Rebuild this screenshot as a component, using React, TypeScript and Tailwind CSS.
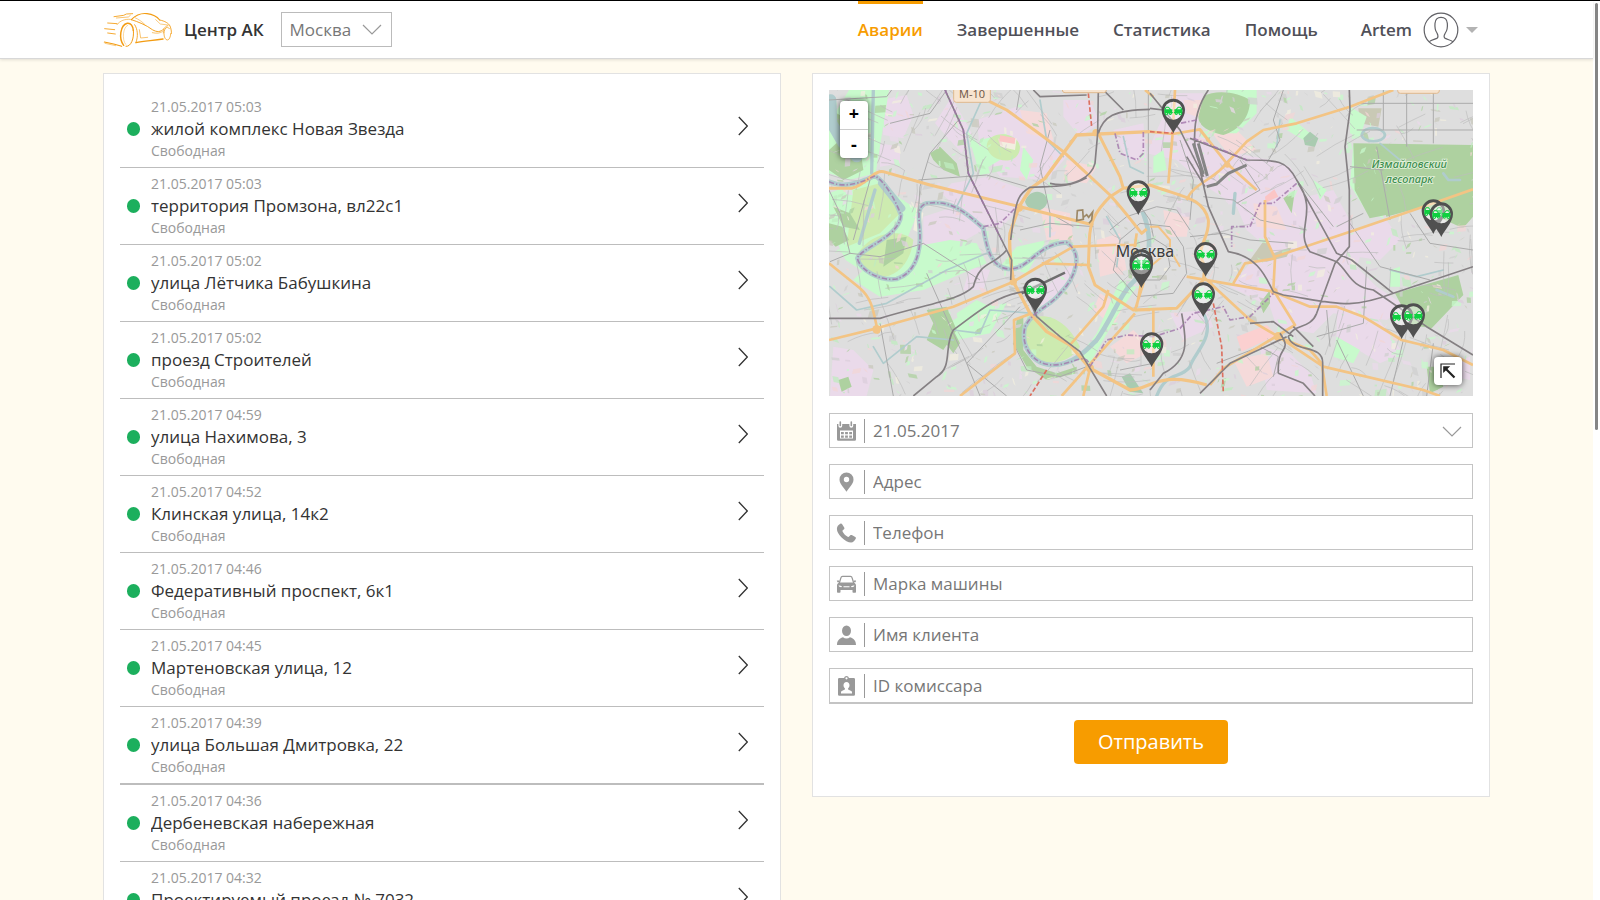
import React from "react";

type Incident = { time: string; place: string };

const incidents: Incident[] = [
  { time: "21.05.2017 05:03", place: "жилой комплекс Новая Звезда" },
  { time: "21.05.2017 05:03", place: "территория Промзона, вл22с1" },
  { time: "21.05.2017 05:02", place: "улица Лётчика Бабушкина" },
  { time: "21.05.2017 05:02", place: "проезд Строителей" },
  { time: "21.05.2017 04:59", place: "улица Нахимова, 3" },
  { time: "21.05.2017 04:52", place: "Клинская улица, 14к2" },
  { time: "21.05.2017 04:46", place: "Федеративный проспект, 6к1" },
  { time: "21.05.2017 04:45", place: "Мартеновская улица, 12" },
  { time: "21.05.2017 04:39", place: "улица Большая Дмитровка, 22" },
  { time: "21.05.2017 04:36", place: "Дербеневская набережная" },
  { time: "21.05.2017 04:32", place: "Проектируемый проезд № 7032" },
];

/* ---------- header drawings ---------- */

function Logo() {
  return (
    <svg viewBox="42 33 210 108" className="h-9 w-[70px] shrink-0" fill="none" stroke="#f39c12" strokeLinecap="round" strokeLinejoin="round">
      <g strokeWidth="2.6">
        <path d="M75 47 L104 43 L112 39 L131 38" />
        <path d="M82 51 L118 48 L124 43" strokeWidth="1.8" />
        <path d="M56 66 L84 68" />
        <path d="M47 83 L77 86 M56 96 L79 99" />
        <path d="M46 123 L74 129 L98 136" strokeWidth="3.2" />
        <path d="M48 127 L80 134" strokeWidth="1.6" />
        <path d="M84 71 C94 58 108 54 124 55" strokeWidth="1.8" />
        <path d="M127 56 C140 43 158 36 174 38 C190 40 204 47 212 57" strokeWidth="3.4" />
        <path d="M212 57 C228 60 239 67 243 75 C246 82 248 92 247 98" strokeWidth="2.6" />
        <path d="M127 56 C146 62 172 72 190 86 C204 94 214 94 224 84" strokeWidth="2.8" />
        <path d="M138 50 C150 56 158 61 168 71" strokeWidth="1.6" />
        <path d="M200 56 L214 69 L236 72" strokeWidth="1.6" />
        <path d="M137 71 C146 84 148 106 141 124" strokeWidth="2.6" />
        <path d="M141 125 C164 120 190 119 222 114" strokeWidth="4.2" />
        <path d="M151 86 L155 111 L176 109" strokeWidth="1.8" />
        <path d="M190 95 C204 98 212 97 220 92" strokeWidth="1.8" />
      </g>
      <path d="M104 133 C88 112 94 72 115 67 C124 66 131 74 133 88" strokeWidth="4.4" />
      <path d="M133 88 C136 112 126 138 111 136" strokeWidth="3" />
      <path d="M110 130 C98 116 102 78 116 73" strokeWidth="1.2" />
      <ellipse cx="235" cy="98" rx="10" ry="19" strokeWidth="2.2" strokeDasharray="76 16" />
      <path d="M223 96 C222 84 228 75 237 74" strokeWidth="2" />
    </svg>
  );
}

function Avatar() {
  return (
    <svg viewBox="578 35 108 108" className="h-9 w-9" fill="none" stroke="#616166" strokeWidth="3.6">
      <circle cx="632" cy="89" r="50.5" />
      <path d="M597 124 C604 118 616 117 621 113 C625 109 623 104 620 98 C615 91 613 80 614 69 C615 56 621 51 632 51 C643 51 650 56 651 69 C652 80 650 91 645 98 C641 104 640 109 643 113 C648 117 660 118 668 124" />
    </svg>
  );
}

function ChevronDown({ className }: { className: string }) {
  return (
    <svg viewBox="0 0 20 12" className={className} fill="none" stroke="#999" strokeWidth="1.2" aria-hidden="true">
      <path d="M1 1 L10 10 L19 1" />
    </svg>
  );
}

/* ---------- form icons ---------- */

const iconClass = "h-5 w-5 shrink-0 text-[#999]";

const CalendarIcon = () => (
  <svg viewBox="0 0 20 20" className={iconClass}>
    <path fill="currentColor" fillRule="evenodd" d="M1 3h1.400v1.800a1.900 1.900 0 0 0 3.800 0V3h7.200v1.800a1.900 1.900 0 0 0 3.800 0V3H20v15.500a1.300 1.300 0 0 1-1.300 1.300H2.300a1.300 1.300 0 0 1-1.300-1.300zM4 9.500v8h13v-8z" />
    <path stroke="currentColor" strokeWidth="1.600" strokeLinecap="round" d="M4.300 1v3.500M15.300 1v3.500" />
    <path fill="currentColor" d="M5 11h2.800v2.300H5zM9.100 11h2.800v2.300H9.100zM13.200 11h2.800v2.300h-2.800zM5 14.500h2.800v2.300H5zM9.100 14.500h2.800v2.300H9.100zM13.200 14.500h2.800v2.300h-2.800z" />
  </svg>
);
const PlaceIcon = () => (
  <svg viewBox="0 0 20 20" className={iconClass}>
    <path fill="currentColor" fillRule="evenodd" d="M10.500 0.500a7 7 0 0 0-7 7c0 4.500 4.500 8 7 12.300c2.500-4.300 7-7.800 7-12.300a7 7 0 0 0-7-7zm0 4.300a2.700 2.700 0 1 1 0 5.400a2.700 2.700 0 0 1 0-5.400z" />
  </svg>
);
const PhoneIcon = () => (
  <svg viewBox="0 0 20 20" className={iconClass}>
    <path fill="currentColor" d="M4.300 0.700C5 0.300 5.600 0.400 6 1l2.200 3.400c.4.700.3 1.300-.2 1.800L6.800 7.300c-.4.400-.4.800-.1 1.400c1.200 2.200 2.900 3.900 5 5.100c.6.300 1 .2 1.400-.2l1-1.200c.5-.5 1.100-.6 1.700-.3l3.500 2c.6.300.8.900.5 1.500c-.9 2.300-2.700 4-4.700 4c-2.700 0-6.500-2.100-9.500-5.100S.9 8.500.9 5.700C.9 3.500 2.300 1.700 4.300.7z" />
  </svg>
);
const CarIcon = () => (
  <svg viewBox="0 0 20 20" className={iconClass}>
    <path fill="none" stroke="currentColor" strokeWidth="1.200" d="M3.200 9.500 L5 3.500 Q5.300 2.300 6.500 2.300 H14.500 Q15.700 2.300 16 3.500 L17.800 9.500" />
    <path fill="currentColor" fillRule="evenodd" d="M3.300 8.500H17.700C19.200 9 20 10 20 11.500V18a.8.800 0 0 1-.8.800H17.300a.8.800 0 0 1-.8-.8V16H4.500v2a.8.800 0 0 1-.8.800H1.800a.8.800 0 0 1-.8-.8V11.500C1 10 1.800 9 3.300 8.500zM2.500 11.500c.5 1.400 1.500 1.800 3.500 1.600c0-1.200-1.500-2-3.500-1.600zM18.500 11.500c-2-.4-3.500.4-3.500 1.600c2 .2 3-.2 3.500-1.600zM7.500 12.300v1h6v-1z" />
    <path fill="currentColor" d="M.8 6.500h2.500v1.800H1.500zM20.200 6.500h-2.500v1.800h1.800z" />
  </svg>
);
const PersonIcon = () => (
  <svg viewBox="0 0 20 20" className={iconClass}>
    <ellipse cx="10.500" cy="5.800" rx="4.500" ry="5.300" fill="currentColor" />
    <path fill="currentColor" d="M1 20c0-4 1.800-6.300 6-7.800c1 .8 2.200 1.200 3.500 1.200s2.500-.4 3.500-1.200c4.200 1.500 6 3.800 6 7.800z" />
  </svg>
);
const BadgeIcon = () => (
  <svg viewBox="0 0 20 20" className={iconClass}>
    <path fill="currentColor" fillRule="evenodd" d="M3.300 2H8a2.600 2.600 0 0 1 5 0h4.700A1.300 1.300 0 0 1 19 3.300V18.500a1.300 1.300 0 0 1-1.300 1.300H3.300A1.300 1.300 0 0 1 2 18.500V3.300A1.300 1.300 0 0 1 3.300 2zM10.500 1.200a1.100 1.100 0 1 0 0 2.200a1.100 1.100 0 0 0 0-2.200zM10.500 6c-1.900 0-3 1.400-3 3.200c0 1.300.6 2.300 1.400 3v1.300l-3.100 1.400c-.6.300-.8.700-.8 1.400V17.500h11v-1.200c0-.7-.2-1.100-.8-1.400l-3.100-1.400v-1.300c.8-.7 1.400-1.700 1.400-3c0-1.800-1.100-3.200-3-3.200z" />
  </svg>
);

/* ---------- map ---------- */

/* Small deterministic generator: the same patches on every render. */
function makeRandom(seed: number) {
  let s = seed;
  return () => {
    s = (s * 1664525 + 1013904223) % 4294967296;
    return s / 4294967296;
  };
}

const patchColors = ["#c8facc", "#c8facc", "#aed1a0", "#f3d6d6", "#eadaea", "#f2efe0", "#c9c9bd", "#c0ecc0", "#dccfdc", "#d0d0d0"];
const patches = (() => {
  const r = makeRandom(77);
  return Array.from({ length: 1300 }, () => {
    const x = Math.round(27 + r() * 1932);
    const y = Math.round(30 + r() * 918);
    const w = Math.round(4 + r() * r() * 32);
    const h = Math.round(4 + r() * r() * 26);
    const k = Math.round((r() - 0.5) * 14);
    return { d: `M${x} ${y}l${w} ${k}l${k} ${h}l${-w} ${-k}z`, fill: patchColors[Math.floor(r() * patchColors.length)] };
  });
})();

const streets = (() => {
  const r = makeRandom(31);
  return Array.from({ length: 280 }, () => {
    const x = 27 + r() * 1932;
    const y = 30 + r() * 918;
    const dx = x - 985;
    const dy = y - 520;
    const d = Math.hypot(dx, dy) || 1;
    const radial = r() > 0.5;
    const ux = radial ? dx / d : -dy / d;
    const uy = radial ? dy / d : dx / d;
    const len = 40 + r() * 110;
    const bend = (r() - 0.5) * 26;
    return `M${x.toFixed(0)} ${y.toFixed(0)}q${((ux * len) / 2 - uy * bend).toFixed(0)} ${((uy * len) / 2 + ux * bend).toFixed(0)} ${(ux * len).toFixed(0)} ${(uy * len).toFixed(0)}`;
  }).join("");
})();

const pins: [number, number][] = [
  [1060, 160],
  [955, 405],
  [1157, 590],
  [964, 612],
  [964, 624],
  [1150, 711],
  [646, 697],
  [995, 861],
  [1840, 462],
  [1864, 471],
  [1745, 777],
  [1780, 774],
];

function CarShape({ flip }: { flip?: boolean }) {
  return (
    <g transform={flip ? "scale(-1 1)" : undefined}>
      <path fill="#0fd040" d="M-27 -72 L-22 -80 L-14 -80 L-8 -73 L-2 -71 L-4 -66 L-1 -62 L-5 -59 L-27 -60z" />
      <path fill="#e8f0e8" d="M-21 -77 L-15 -77 L-11 -72 L-23 -72z" />
      <circle cx="-21" cy="-59" r="5" fill="#0fd040" />
      <circle cx="-9" cy="-59" r="4" fill="#0fd040" />
      <circle cx="-21" cy="-59" r="1.800" fill="#e8f0e8" />
      <circle cx="-9" cy="-59" r="1.300" fill="#e8f0e8" />
    </g>
  );
}

function MapPin({ x, y }: { x: number; y: number }) {
  return (
    <g transform={`translate(${x} ${y})`}>
      <path
        fill="#505050"
        fillRule="evenodd"
        d="M0 0 C-6 -16 -35 -44 -35 -69 A35 35 0 0 1 35 -69 C35 -44 6 -16 0 0z M0 -95 A27 27 0 1 0 0 -41 A27 27 0 1 0 0 -95z"
      />
      <circle cx="0" cy="-68" r="27" fill="#fff" fillOpacity="0.4" />
      <CarShape />
      <CarShape flip />
    </g>
  );
}

function CityMap() {
  return (
    <svg viewBox="27 30 1932 918" preserveAspectRatio="xMidYMid slice" className="absolute inset-0 h-full w-full" role="img" aria-label="Карта Москвы">
      <rect x="27" y="30" width="1932" height="918" fill="#dedede" />
      {/* industrial and residential zones */}
      <g fill="#eadaea">
        <path d="M180 60l80 -15 20 60 -30 70 -60 -10zM395 50l60 110 -30 60 -80 -90zM470 120l120 -40 90 80 60 70 -60 70 -140 -10 -60 -80zM395 310l110 -20 110 40 -20 60 -60 60 -70 -30 -70 -50 -30 -30zM310 410l110 -35 70 75 -80 45 -100 0zM40 800l60 10 60 60 -20 78 -110 0zM700 600l60 -50 0 50 -80 90 -30 -30zM730 60l80 0 30 70 -60 40 -50 -60zM880 150l90 -20 10 110 -60 0zM180 190l60 10 0 50 -60 10zM450 560l60 10 -20 60 -60 0z" />
        <g transform="translate(990 0)">
          <path d="M70 40l90 0 -20 110 70 60 150 30 60 20 50 90 80 -20 60 110 30 60 -20 60 60 60 90 60 -60 40 -160 -20 -60 60 -110 -20 -20 -60 -120 -60 60 -70 60 -40 -70 -60 -30 -70 -90 -60 -90 -80 -90 -20zM620 450l90 -30 40 60 -60 60 -70 -10zM560 680l120 30 80 110 -70 30 -130 -80zM330 800l90 20 60 60 20 60 -150 -10zM60 700l110 -10 20 50 -90 40zM900 850l60 -20 0 70 -50 -10zM300 330l60 -10 70 110 -60 60 -70 -40z" />
          <path fill="#c9c9b5" d="M300 540l50 -70 20 50 55 -20 -15 30 -60 15zM625 85l70 0 -10 55 -55 -10z" />
        </g>
      </g>
      <g fill="#f5dada">
        <path d="M600 90l80 10 20 80 -80 -20zM830 480l70 -20 20 110 -80 20zM660 380l90 20 10 80 -80 0zM840 640l70 40 -30 60 -60 -50zM870 800l70 -50 60 60 -80 40zM740 240l90 20 -30 50 -70 -10zM1030 390l80 20 -10 60 -60 0zM1140 110l110 40 60 60 -80 20zM1300 370l70 10 30 70 -90 -10zM1090 60l60 0 10 60 -60 -20zM1240 840l100 -20 20 70 -80 30z" />
      </g>
      {/* parks and fields */}
      <g fill="#c8facc">
        <path d="M27 130l60 -100 120 0 -40 250 -80 20 -60 -20zM27 340l130 -50 90 70 50 30 -50 120 -80 90 -90 -60 -50 -100zM180 520l210 -40 80 10 30 60 -50 20 -140 60 -130 20 -80 -50zM440 150l50 60 20 70 -30 5zM480 180l80 -20 -20 80 -50 30zM900 600l50 20 -60 90 -80 140 -40 -10 60 -80 40 -90zM340 770l60 -50 70 -40 90 -10 -50 90 -100 20zM540 560l50 -60 90 -20 -60 100zM1000 230l30 -20 10 60 -40 10zM610 200l30 40 -20 60 -20 -30zM410 700l60 -40 40 20 -20 60 -70 20z" />
        <g transform="translate(990 0)">
          <path d="M230 30l90 0 0 70 -60 60 -90 0zM600 80l50 30 -20 60 -30 -10zM610 195l50 10 40 210 -50 -20 -50 -80zM720 570l30 -10 0 60 -30 0zM410 150l50 30 20 -20 -60 -50zM560 770l70 40 -20 40 -60 -20zM490 300l40 30 -20 30z" />
        </g>
      </g>
      <path fill="#cdebb0" d="M110 530 C140 460 240 440 280 480 C270 560 220 600 160 590zM100 330l80 -20 60 90 -60 60 -100 40zM500 200c0 -50 90 -50 100 0c0 60 -90 50 -100 0zM620 720 C680 690 740 720 780 800 C750 850 680 860 640 830 C600 790 600 750 620 720z" />
      <path fill="#f2efe0" d="M290 380l20 20 -10 60 -20 -10zM540 170l50 5 -5 35 -45 -10z" />
      <g fill="#aed1a0">
        <path d="M60 180l60 20 10 70 -60 30 -43 -30 0 -60zM27 430l40 10 20 40 -40 20 -20 -20zM320 690l60 -10 30 70 -40 60 -50 -30 20 -50zM330 220l30 -20 50 50 10 40 -50 -20 -30 -30zM370 780l30 -30 20 40 -20 30zM590 720l20 -10 0 100 40 50 60 20 60 -20 0 20 -90 20 -60 -40 -40 -70zM55 900l30 -10 10 30 -30 15zM30 90l40 20 20 60 -50 -20zM40 380l50 20 30 50 -50 -10zM200 480l60 -10 -10 50 -60 40z" />
        <g transform="translate(990 0)">
          <path d="M160 50 C200 25 270 40 300 60 C300 110 270 150 220 165 C180 155 145 140 145 110zM610 190l359 5 0 215 -30 35 -130 -60 -150 30 -45 -85zM735 640l190 -55 15 60 -95 100 -60 -10zM400 355l35 -25 -10 70zM830 860l30 0 20 60 -40 20zM330 670l30 -40 0 40 -20 30z" />
        </g>
      </g>
      {/* scattered blocks */}
      <g opacity="0.75">
        {patches.map((p, i) => (
          <path key={i} d={p.d} fill={p.fill} />
        ))}
      </g>
      <path fill="#aed1a0" d="M1650 215l300 -15 9 200 -30 30 -120 -50 -110 30z" />
      <path fill="#a9cbb0" d="M615 365 C625 325 680 325 682 365 C675 400 625 400 615 365zM1450 175l20 -20 25 20 -10 25 -30 -5zM905 890l25 -10 40 60 -40 -5z" />
      <path fill="#fbc5c5" d="M540 166l46 8 -2 18 -46 -8zM1335 350l28 -22 12 22 -38 18z" />
      <path fill="#fbd0d0" d="M1250 770l90 -35 30 30 -105 50z" />
      {/* water */}
      <g fill="none" stroke="#b0cccd" strokeLinejoin="round" strokeLinecap="round">
        <path strokeWidth="34" d="M32 60 L35 130 L70 190 L110 230" />
        <path strokeWidth="14" d="M27 305 C80 330 140 300 165 287 C200 310 230 370 243 405 C240 470 120 505 112 535 C120 570 180 605 230 597 C280 580 300 530 300 470 C300 420 285 380 320 370 C390 360 430 390 490 445 C500 500 510 560 565 567 C630 570 650 490 740 487 C790 520 770 590 720 640 C690 680 640 690 615 740 C600 800 640 855 700 855 C760 855 800 810 830 780 C880 710 900 640 945 600 C990 550 1000 480 970 400" />
        <path strokeWidth="22" d="M185 310 L245 385" />
        <path strokeWidth="10" d="M165 330 L118 490 M160 30 L155 280 M1150 700 C1190 770 1120 820 1110 860 C1080 900 1040 870 1010 948M1240 400 L1245 340" />
        <path strokeWidth="5" d="M485 60 L440 160 L460 280 L410 380 M660 60 L680 180 L730 230 M500 520 L380 570 L200 670 L110 690 L30 620 M400 750 L480 760 L510 690 L640 700 M160 800 L190 850 L290 770 L400 780 M1380 120 L1370 200 M690 400 L690 470M860 410 L900 480 L890 560M1710 570 L1790 590 L1870 570M1680 190 L1740 240M910 170 L930 260 L970 280" />
        <path strokeWidth="8" d="M1625 165 C1630 135 1690 140 1695 165 C1690 190 1630 190 1625 165M1870 280 L1885 300 L1920 300M1850 630 L1900 650" />
      </g>
      {/* minor streets */}
      <path d={streets} fill="none" stroke="#bdbdbd" strokeWidth="2" />
      <g fill="none" stroke="#ababab" strokeWidth="3">
        <path d="M27 60 L200 50 L215 30M420 115 L330 220 L300 320 L295 400M295 300 L500 285 L620 320M30 545 L90 520 L180 530 L310 490 L480 600M320 580 L440 850 L480 948M180 730 L220 948M90 520 L60 400 L27 330M440 850 L600 680M690 150 L660 260 L690 400 L760 440M820 440 L690 430 L600 450M580 790 L620 870 L720 890 L800 860M100 480 L150 300M380 30 L330 100 L210 130M600 30 L590 90M440 850 L560 948M900 870 L1000 850" />
        <path d="M910 320 L940 350 L990 420 L1000 470 M870 450 L920 410 L1010 380 L1070 390 L1110 450M880 570 L950 650 L1060 640 L1100 580 L1090 500 L1050 440 L960 430 L900 480 L880 570" />
        <path d="M930 580 L960 600 L1020 600 L1050 560 L1040 500 L1000 475 L950 490 L930 530zM985 30 L985 330M1080 180 L1120 300 L1110 420" />
        <g transform="translate(990 0)">
          <path d="M400 30 L370 120 L390 180 L350 250M120 470 L220 460 L300 480 L430 490M440 300 L550 440M620 150 L969 150M620 70 L969 70M700 30 L700 150M770 30 L770 200M850 30 L850 190M680 200 L720 420M600 260 L700 270M600 430 L690 560 L840 600M780 400 L840 490 L969 510M650 560 L640 730 L500 770M760 780 L720 948M850 790 L830 948M560 780 L640 948M200 850 L330 800 L385 830 L370 890M270 240 L330 330 L260 370M160 350 L250 360 L330 420 L470 450M560 440 L640 400M530 690 L540 800" />
        </g>
      </g>
      {/* motorways */}
      <g fill="none" stroke="#f3c484" strokeWidth="8" strokeLinejoin="round">
        <path d="M27 325 L95 325 C140 315 160 270 190 275 L330 315 L600 380 L820 435" strokeWidth="9" />
        <path d="M490 55 L560 90 L650 155 L730 215 L870 345 C920 400 940 430 965 460 L980 447" strokeWidth="9" />
        <path d="M990 155 L770 165 L675 295 L632 325 L597 380 L570 460 C565 510 575 560 580 605 L630 700 L680 755 L750 795 L810 865 L930 930 C990 930 1010 870 1160 915" strokeWidth="10" />
        <path d="M27 780 L170 745 L400 680 L580 605 L690 540 L760 500 L880 495 L950 495M27 550 L120 625 C160 660 160 700 175 760M420 948 L585 820 L582 720 L635 700M665 550 L805 555M725 948 L945 700M790 948 L810 865M750 795 L850 680 L865 630M945 690 L990 690" />
        <path d="M835 160 L900 290 L910 325 L870 350 C820 400 810 430 808 480 L805 560 L825 615 L940 690 L1070 685 L1150 600 L1155 560 C1120 500 1170 480 1165 420 C1150 350 1080 350 990 315 L910 325" strokeWidth="9" />
        <path d="M975 30 L1000 50M950 460 L940 530 L970 610 L945 690M965 600 L950 680M1000 690 L1000 820 L1000 890" />
        <g transform="translate(990 0)">
          <path d="M75 30 L68 160 L55 310M150 150 L230 250 L320 330M0 155 L68 162 L150 148 L230 250M110 360 C130 310 190 300 230 250 L290 185 L340 150 L440 130 L600 80 L730 30M375 530 L600 455 L820 380 L969 328" />
          <path d="M250 610 L285 550 L375 535 L370 630 L435 735 L220 865 L180 915 M110 590 L370 635 L480 680 L560 680 L640 710 L755 780 L880 810 L969 855M160 590 L300 720 L385 770 L520 860 L820 930 L870 948M385 770 L480 810 L515 850 L530 948M375 535 L345 470 L345 360" />
          <path d="M0 440 L25 440 L60 480 L60 510 L0 560M60 510 L90 560" strokeWidth="6" />
        </g>
      </g>
      <g fill="#f3c484">
        <circle cx="170" cy="748" r="13" />
        <circle cx="597" cy="383" r="12" />
        <circle cx="580" cy="605" r="11" />
        <circle cx="810" cy="865" r="12" />
        <circle cx="828" cy="158" r="11" />
        <circle cx="1375" cy="770" r="14" />
        <circle cx="1362" cy="634" r="11" />
        <circle cx="1222" cy="254" r="9" />
      </g>
      {/* railways */}
      <g fill="none" stroke="#858083" strokeWidth="5" strokeLinejoin="round">
        <path d="M375 30 L430 150 L445 280 L500 390 L545 480 L560 510 C520 560 480 540 460 620 C420 660 330 670 180 715 L27 715M560 510 L575 540 L572 600M610 635 C520 650 470 700 400 750 C370 800 400 860 350 890 L280 948M800 293 C740 325 700 318 630 322 C590 345 590 370 580 420 L572 480M835 30 L833 160 L825 250 C815 290 760 325 690 310M835 160 C850 110 880 90 990 88M850 30 L910 90M640 30 L660 50 L800 45M610 620 L650 710 L720 770 L780 815 L860 948" />
        <path d="M605 640 L735 578" stroke="#6e6e6e" strokeWidth="7" />
        <g transform="translate(990 0)">
          <path d="M0 40 L90 150 L150 270 L175 380 L235 515 C330 530 350 600 370 635 L400 645 C560 670 600 690 730 640 L969 560M0 85 L40 90M175 30 C140 80 130 140 135 200 L160 290M120 175 L290 240 C380 240 410 240 440 300 C510 400 430 450 480 515 L560 545 C600 580 600 620 670 630 L830 740 L969 825M445 310 L560 520 L605 540 L730 640M598 30 L600 90 L585 200 L598 330 L598 500 L555 550 L500 700 C480 750 430 730 415 770 C430 820 520 790 518 850 L518 948M300 730 L370 725 L430 770M150 940 L240 850 L410 770M385 880 C380 790 430 820 390 760M430 740 L490 800M385 880 L460 910 L495 948M95 700 C110 780 120 840 40 880 L0 930M165 320 L110 230" />
          <path stroke="#858585" strokeWidth="9" d="M145 190 L172 288M130 190 L160 282M170 320 L200 312 L235 280 L290 255" />
        </g>
      </g>
      {/* district boundaries */}
      <g fill="none" stroke="#a277ab" strokeWidth="5" strokeDasharray="16 6 4 6" opacity="0.8" strokeLinejoin="round">
        <path d="M27 305 C80 330 140 300 165 287 C200 310 230 370 243 405 C240 470 120 505 112 535 C120 570 180 605 230 597 C280 580 300 530 300 470 C300 420 285 380 320 370 C390 360 430 390 490 445 C500 500 510 560 565 567 C630 570 650 490 740 487 C790 520 770 590 720 640 C690 680 640 690 615 740 C600 800 640 855 700 855 C760 855 800 810 810 860" />
        <path d="M490 440 L540 430 L590 380M885 160 L900 220 L950 240 L970 220 L970 155M810 860 L860 780 L920 765 L1000 770 L1080 745 L1120 700 L1210 680 L1230 720 L1290 710 L1360 640" />
        <path d="M1430 310 L1360 370 L1320 370 L1290 440 L1235 440 L1235 500M375 30 L430 150 L445 280 L500 390 L545 480M1130 120 L1080 130M1120 175 L1280 240" />
      </g>
      <g fill="none" stroke="#dc7060" strokeWidth="5" strokeDasharray="14 7">
        <path d="M805 40 L815 140M1180 670 L1205 800 L1210 940M680 870 L630 948M990 155 L1060 160" />
      </g>
      {/* landmark */}
      <path d="M772 392l16 -2 2 28 -20 4zM790 412l10 -8 6 8 12 -16 -3 24 -8 10" fill="none" stroke="#9c8866" strokeWidth="5" />
      {/* road shields */}
      <g fill="#f7e4cf" stroke="#dfb98f" strokeWidth="3">
        <rect x="401" y="10" width="110" height="57" rx="8" />
        <rect x="727" y="-20" width="132" height="58" rx="8" />
        <rect x="1733" y="-20" width="125" height="60" rx="8" />
      </g>
      <g fontFamily="'Open Sans', 'Noto Sans', sans-serif" textAnchor="middle">
        <text x="456" y="53" fontSize="33" fontWeight="500" fill="#6b5344">
          М-10
        </text>
        <g fill="#3f8f4f" stroke="#e4f2dd" strokeWidth="5" paintOrder="stroke" fontFamily="'Noto Sans', sans-serif" fontStyle="italic" fontWeight="500" fontSize="33">
          <text x="1768" y="265">Измайловский</text>
          <text x="1768" y="308">лесопарк</text>
        </g>
        <text x="975" y="530" fontSize="48" fontFamily="'Noto Sans', sans-serif" fill="#3c3c3c" stroke="#e8e8e8" strokeWidth="4" paintOrder="stroke">
          Москва
        </text>
      </g>
      {pins.map(([x, y], i) => (
        <MapPin key={i} x={x} y={y} />
      ))}
    </svg>
  );
}

/* ---------- form ---------- */

function Field({ id, label, icon, last }: { id: string; label: string; icon: React.ReactNode; last?: boolean }) {
  return (
    <div className={`flex items-center border border-[#c4c4c4] pl-1.5 ${last ? "h-9 border-b-2" : "h-[35px]"}`}>
      <label htmlFor={id} className="flex h-6 items-center border-r border-[#999] pr-2" aria-label={label}>
        {icon}
      </label>
      <input id={id} placeholder={label} className="h-full min-w-0 flex-1 bg-transparent pl-2 text-[17px] text-[#555] outline-none placeholder:text-[#777]" />
    </div>
  );
}

const navLink = "flex h-full items-center border-y-[3px] border-transparent text-[#505058]";

export default function App() {
  return (
    <div className="flex h-screen overflow-hidden border-t border-black bg-white font-['Open_Sans','Noto_Sans',sans-serif] text-[#333]">
      <div className="flex min-w-0 flex-1 flex-col bg-[#fffbef]">
        <header className="relative z-10 h-[58px] shrink-0 border-b border-[#d8d8d8] bg-white shadow-[0_1px_3px_rgba(0,0,0,0.12)]">
          <div className="mx-auto flex h-full w-full max-w-[1387px] items-center">
            <a href="#home" className="flex items-center gap-[11px] text-[17px] font-semibold text-[#333]">
              <Logo />
              Центр АК
            </a>
            <div className="relative ml-[17px]">
              <select aria-label="Город" className="h-[35px] w-[111px] appearance-none border border-[#bbb] bg-white pl-2 text-[17px] text-[#777]">
                <option>Москва</option>
              </select>
              <ChevronDown className="pointer-events-none absolute top-3 right-2.5 h-3 w-5" />
            </div>
            <nav className="ml-auto flex h-full items-center gap-[34px] pr-3 text-[17px] font-semibold">
              <a href="#accidents" className="flex h-full items-center border-y-[3px] border-transparent border-t-[#f79c00] text-[#f79c00]" aria-current="page">
                Аварии
              </a>
              <a href="#done" className={navLink}>Завершенные</a>
              <a href="#stats" className={navLink}>Статистика</a>
              <a href="#help" className={navLink}>Помощь</a>
              <button type="button" className="ml-[9px] flex items-center gap-[11px] text-[#505058]">
                Artem
                <span className="flex items-center gap-[7px]">
                  <Avatar />
                  <svg viewBox="0 0 12 6" className="h-1.5 w-3" aria-hidden="true">
                    <path d="M0 0h12L6 6z" fill="#b3b3b3" />
                  </svg>
                </span>
              </button>
            </nav>
          </div>
        </header>

        <main className="min-h-0 flex-1 overflow-hidden">
          <div className="mx-auto mt-[14px] grid w-full max-w-[1387px] grid-cols-2 items-start gap-[31px]">
            <section className="border border-[#e2e2e2] bg-white px-4 pt-[17px] pb-4" aria-label="Аварии">
              <ul>
                {incidents.map((item, i) => (
                  <li key={item.place} className={`border-[#bdbdbd] ${i === 8 ? "border-b-2" : "border-b"}`}>
                    <a href={`#incident-${i}`} className="flex items-center pt-[5px] pr-4 pb-[5px] pl-[7px]">
                      <span className="mr-[11px] h-3.5 w-[13px] shrink-0 rounded-full bg-[#1caf5d]" />
                      <span className="flex min-w-0 flex-1 flex-col">
                        <span className="text-sm leading-[22px] text-[#999]">{item.time}</span>
                        <span className="truncate text-[17px] leading-[22px] text-[#333]">{item.place}</span>
                        <span className="text-sm leading-[22px] text-[#999]">Свободная</span>
                      </span>
                      <svg viewBox="0 0 10 20" className="mb-1.5 h-5 w-2.5" fill="none" stroke="#333" strokeWidth="1.300" aria-hidden="true">
                        <path d="M.8 1 L9.300 10 L.8 19" />
                      </svg>
                    </a>
                  </li>
                ))}
              </ul>
            </section>

            <section className="border border-[#e2e2e2] bg-white px-4 pt-4 pb-8" aria-label="Новая авария">
              <div className="relative h-[306px] overflow-hidden">
                <CityMap />
                <div className="absolute top-[11px] left-[11px] flex w-7 flex-col divide-y divide-[#ccc] rounded bg-white font-bold text-black shadow-[0_0_6px_rgba(0,0,0,0.7)]">
                  <button type="button" className="h-[29px] pb-1 text-lg leading-6">+</button>
                  <button type="button" className="h-7 text-lg leading-7">-</button>
                </div>
                <button type="button" aria-label="Развернуть карту" className="absolute right-[11px] bottom-[11px] flex h-7 w-7 items-center justify-center rounded bg-white shadow-[0_0_6px_rgba(0,0,0,0.7)]">
                  <svg viewBox="0 0 16 16" className="h-4 w-4" fill="none" stroke="#222">
                    <path d="M1 15V1h14" strokeWidth="1.200" />
                    <path d="M6 6l8.500 8.500" strokeWidth="2.200" />
                    <path d="M3.200 3.200h7L3.200 10z" fill="#222" stroke="none" />
                  </svg>
                </button>
              </div>
              <form className="mt-[17px] flex flex-col gap-4" onSubmit={(e) => e.preventDefault()}>
                <div className="relative flex h-[35px] items-center border border-[#c4c4c4] pl-1.5">
                  <label htmlFor="date" className="flex h-6 items-center border-r border-[#999] pr-2" aria-label="Дата">
                    <CalendarIcon />
                  </label>
                  <select id="date" className="h-full min-w-0 flex-1 appearance-none bg-transparent pl-2 text-[17px] text-[#777] outline-none">
                    <option>21.05.2017</option>
                  </select>
                  <ChevronDown className="pointer-events-none absolute top-3 right-2.5 h-3 w-5" />
                </div>
                <Field id="address" label="Адрес" icon={<PlaceIcon />} />
                <Field id="phone" label="Телефон" icon={<PhoneIcon />} />
                <Field id="car" label="Марка машины" icon={<CarIcon />} />
                <Field id="client" label="Имя клиента" icon={<PersonIcon />} />
                <Field id="commissar" label="ID комиссара" icon={<BadgeIcon />} last />
                <button type="submit" className="h-11 w-[154px] self-center rounded-sm bg-[#f79c00] text-xl text-white">
                  Отправить
                </button>
              </form>
            </section>
          </div>
        </main>
      </div>
      <div className="w-[7px] shrink-0 px-0.5 pt-0.5" aria-hidden="true">
        <div className="h-[427px] w-[3px] rounded-full bg-[#858585]" />
      </div>
    </div>
  );
}
